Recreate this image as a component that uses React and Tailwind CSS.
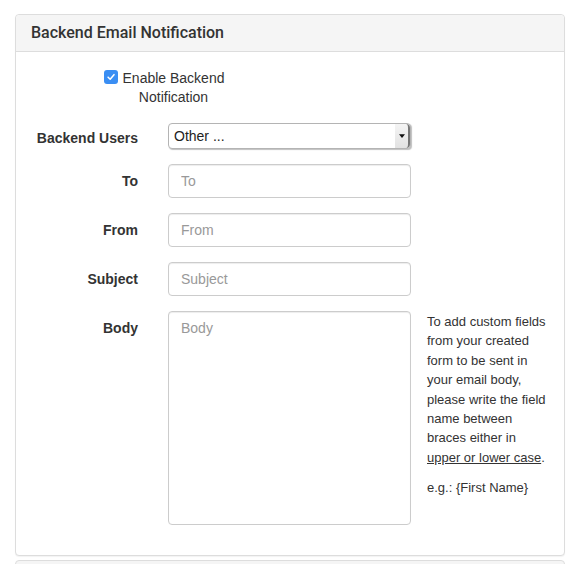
import React from 'react';

const font = { fontFamily: '"Liberation Sans", Arial, sans-serif' };

function Row({ label, labelPad = 'pt-[7px]', children }) {
  return (
    <div className="mb-[15px] flex items-start">
      <label className={`w-[107px] shrink-0 text-right text-[14px] font-bold leading-5 text-[#333] ${labelPad}`}>
        {label}
      </label>
      <div className="ml-[30px] w-[243px] shrink-0">{children}</div>
    </div>
  );
}

function TextInput({ placeholder }) {
  return (
    <input
      placeholder={placeholder}
      className="h-[34px] w-full rounded-[4px] border border-[#ccc] bg-white px-3 text-[14px] text-[#555] shadow-[inset_0_1px_1px_rgba(0,0,0,0.075)] outline-none placeholder:text-[#999]"
    />
  );
}

export default function App() {
  return (
    <div className="min-h-[564px] bg-white pt-[14px]" style={font}>
      <div className="mx-[15px] w-[550px] rounded-[4px] border border-[#ddd] bg-white shadow-[0_1px_1px_rgba(0,0,0,0.05)]">
        <div className="flex h-[37px] items-center rounded-t-[4px] border-b border-[#ddd] bg-[#f5f5f5] px-[15px]">
          <h3 className="font-['Roboto',sans-serif] text-[16px] font-medium leading-none text-[#333]">
            Backend Email Notification
          </h3>
        </div>

        <div className="px-[15px] pb-[30px] pt-[17px]">
          {/* enable checkbox */}
          <div className="mb-[16px] flex items-start pl-[73px]">
            <span className="mt-[1px] flex h-[14px] w-[14px] shrink-0 items-center justify-center rounded-[3px] bg-[#3a8ef3]">
              <svg viewBox="0 0 12 12" className="h-[10px] w-[10px]">
                <path d="M2.5 6.2 L5 8.6 L9.6 3.2" fill="none" stroke="white" strokeWidth="1.8" strokeLinecap="round" strokeLinejoin="round" />
              </svg>
            </span>
            <span className="ml-[4px] w-[103px] text-center text-[14px] leading-[19px] text-[#333]">
              Enable Backend Notification
            </span>
          </div>

          <Row label="Backend Users" labelPad="pt-[5px]">
            <div className="flex h-[26px] w-full items-center rounded-[4px] border border-[#b4b4b4] bg-white shadow-[1px_1px_1px_rgba(0,0,0,0.25)]">
              <span className="flex-1 pl-[5px] text-[14px] text-[#222]">Other ...</span>
              <span className="flex h-full w-[15px] items-center justify-center rounded-r-[4px] border-r-2 border-[#777] bg-gradient-to-b from-[#f4f4f4] to-[#e2e2e2]">
                <svg viewBox="0 0 8 5" className="h-[4px] w-[6px]">
                  <path d="M0 0 L8 0 L4 5 Z" fill="#111" />
                </svg>
              </span>
            </div>
          </Row>

          <Row label="To">
            <TextInput placeholder="To" />
          </Row>
          <Row label="From">
            <TextInput placeholder="From" />
          </Row>
          <Row label="Subject">
            <TextInput placeholder="Subject" />
          </Row>

          <div className="flex items-start">
            <label className="w-[107px] shrink-0 pt-[7px] text-right text-[14px] font-bold leading-5 text-[#333]">
              Body
            </label>
            <textarea
              placeholder="Body"
              className="ml-[30px] h-[214px] w-[243px] shrink-0 resize-none rounded-[4px] border border-[#ccc] bg-white px-3 py-[6px] text-[14px] leading-5 shadow-[inset_0_1px_1px_rgba(0,0,0,0.075)] outline-none placeholder:text-[#999]"
            />
            <div className="ml-[16px] w-[124px] pt-[1px] text-[13px] leading-[19.4px] text-[#333]">
              <p className="mb-[11px]">
                To add custom fields<br />
                from your created<br />
                form to be sent in<br />
                your email body,<br />
                please write the field<br />
                name between<br />
                braces either in<br />
                <span className="underline">upper or lower case</span>.
              </p>
              <p>e.g.: {'{First Name}'}</p>
            </div>
          </div>
        </div>
      </div>

      <div className="mx-[15px] mt-[4px] h-[20px] w-[550px] rounded-t-[4px] border border-[#ddd] bg-[#f5f5f5]" />
    </div>
  );
}
